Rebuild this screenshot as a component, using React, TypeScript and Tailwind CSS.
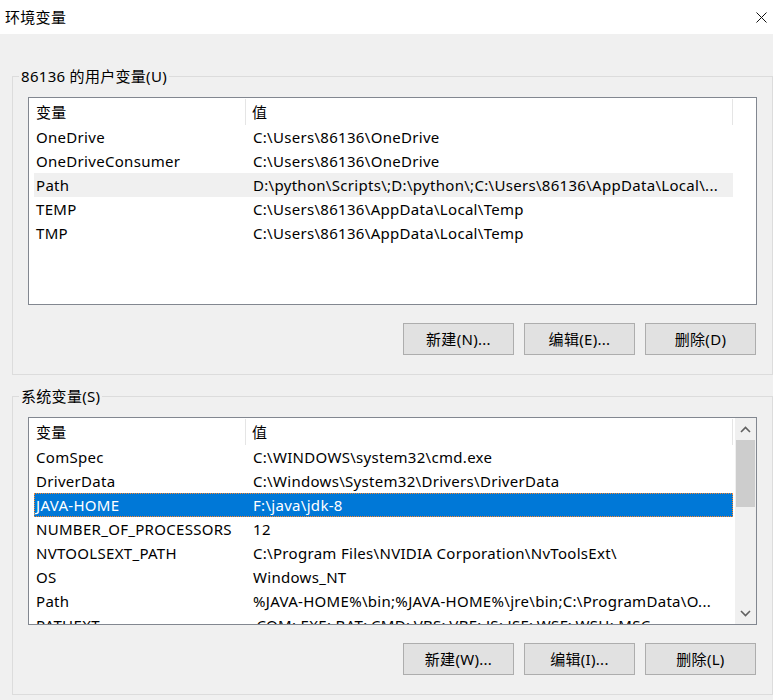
import React from 'react';

type Row = { name: string; value: string };

const userVars: Row[] = [
  { name: 'OneDrive', value: 'C:\\Users\\86136\\OneDrive' },
  { name: 'OneDriveConsumer', value: 'C:\\Users\\86136\\OneDrive' },
  { name: 'Path', value: 'D:\\python\\Scripts\\;D:\\python\\;C:\\Users\\86136\\AppData\\Local\\...' },
  { name: 'TEMP', value: 'C:\\Users\\86136\\AppData\\Local\\Temp' },
  { name: 'TMP', value: 'C:\\Users\\86136\\AppData\\Local\\Temp' },
];

const systemVars: Row[] = [
  { name: 'ComSpec', value: 'C:\\WINDOWS\\system32\\cmd.exe' },
  { name: 'DriverData', value: 'C:\\Windows\\System32\\Drivers\\DriverData' },
  { name: 'JAVA-HOME', value: 'F:\\java\\jdk-8' },
  { name: 'NUMBER_OF_PROCESSORS', value: '12' },
  { name: 'NVTOOLSEXT_PATH', value: 'C:\\Program Files\\NVIDIA Corporation\\NvToolsExt\\' },
  { name: 'OS', value: 'Windows_NT' },
  { name: 'Path', value: '%JAVA-HOME%\\bin;%JAVA-HOME%\\jre\\bin;C:\\ProgramData\\O...' },
  { name: 'PATHEXT', value: '.COM;.EXE;.BAT;.CMD;.VBS;.VBE;.JS;.JSE;.WSF;.WSH;.MSC' },
];

const VarList: React.FC<{
  rows: Row[];
  selected: number;
  focused?: boolean;
  scroll?: boolean;
}> = ({ rows, selected, focused, scroll }) => (
  <div className="flex h-[208px] border border-[#828790] bg-white overflow-hidden">
    <div className="flex-1 min-w-0 pl-[5px]">
      <div className="flex h-[27px] w-[699px] items-center">
        <div className="w-[212px] h-[26px] flex items-center pl-[2px] pt-[2px] border-r border-[#e5e5e5]">变量</div>
        <div className="flex-1 h-[26px] flex items-center pl-[6px] pt-[2px] border-r border-[#e5e5e5]">值</div>
      </div>
      {rows.map((r, i) => {
        const isSel = i === selected;
        const cls = isSel
          ? focused
            ? 'bg-[#0078d7] text-white outline-1 outline-dotted outline-[#ff8728] -outline-offset-1'
            : 'bg-[#f0f0f0]'
          : '';
        return (
          <div key={r.name + i} className={`flex h-[24px] w-[699px] items-center whitespace-nowrap ${cls}`}>
            <div className="w-[213px] pl-[2px] overflow-hidden">{r.name}</div>
            <div className="flex-1 pl-[6px] overflow-hidden">{r.value}</div>
          </div>
        );
      })}
    </div>
    {scroll && (
      <div className="w-[21px] flex flex-col bg-[#f0f0f0]">
        <div className="h-[22px] flex items-center justify-center">
          <svg width="11" height="7" viewBox="0 0 11 7" fill="none">
            <path d="M1 6L5.5 1.5L10 6" stroke="#606060" strokeWidth="1.6" />
          </svg>
        </div>
        <div className="h-[67px] mx-[1px] bg-[#cdcdcd]" />
        <div className="flex-1" />
        <div className="h-[22px] flex items-center justify-center">
          <svg width="11" height="7" viewBox="0 0 11 7" fill="none">
            <path d="M1 1L5.5 5.5L10 1" stroke="#606060" strokeWidth="1.6" />
          </svg>
        </div>
      </div>
    )}
  </div>
);

const WinButton: React.FC<{ children: React.ReactNode }> = ({ children }) => (
  <button className="w-[111px] h-[32px] border border-[#adadad] bg-[#e1e1e1] text-[#000]">
    {children}
  </button>
);

const GroupBox: React.FC<{ title: string; children: React.ReactNode }> = ({ title, children }) => (
  <fieldset className="border border-[#dcdcdc] ml-[12px] w-[761px]">
    <legend className="ml-[6px] px-[2px] h-[20px] leading-[20px]">{title}</legend>
    <div className="pt-[11px] pl-[15px] pr-[15px] pb-[19px]">{children}</div>
  </fieldset>
);

export default function App() {
  return (
    <div
      className="w-[773px] h-[700px] overflow-hidden bg-[#f0f0f0] text-[15px] tracking-[0.3px] text-black"
      style={{ fontFamily: '"Noto Sans", "Noto Sans CJK SC", sans-serif' }}
    >
      <div className="h-[34px] bg-white flex items-center justify-between pl-[5px] pr-[6px]">
        <span>环境变量</span>
        <svg width="11" height="11" viewBox="0 0 11 11" fill="none">
          <path d="M0.5 0.5L10.5 10.5M10.5 0.5L0.5 10.5" stroke="#111" strokeWidth="1" />
        </svg>
      </div>

      <div className="pt-[32px]">
        <GroupBox title="86136 的用户变量(U)">
          <VarList rows={userVars} selected={2} />
          <div className="flex justify-end gap-[10px] mt-[18px] pr-[1px]">
            <WinButton>新建(N)...</WinButton>
            <WinButton>编辑(E)...</WinButton>
            <WinButton>删除(D)</WinButton>
          </div>
        </GroupBox>

        <div className="h-[11px]" />

        <GroupBox title="系统变量(S)">
          <VarList rows={systemVars} selected={2} focused scroll />
          <div className="flex justify-end gap-[10px] mt-[18px] pr-[1px]">
            <WinButton>新建(W)...</WinButton>
            <WinButton>编辑(I)...</WinButton>
            <WinButton>删除(L)</WinButton>
          </div>
        </GroupBox>
      </div>
    </div>
  );
}
